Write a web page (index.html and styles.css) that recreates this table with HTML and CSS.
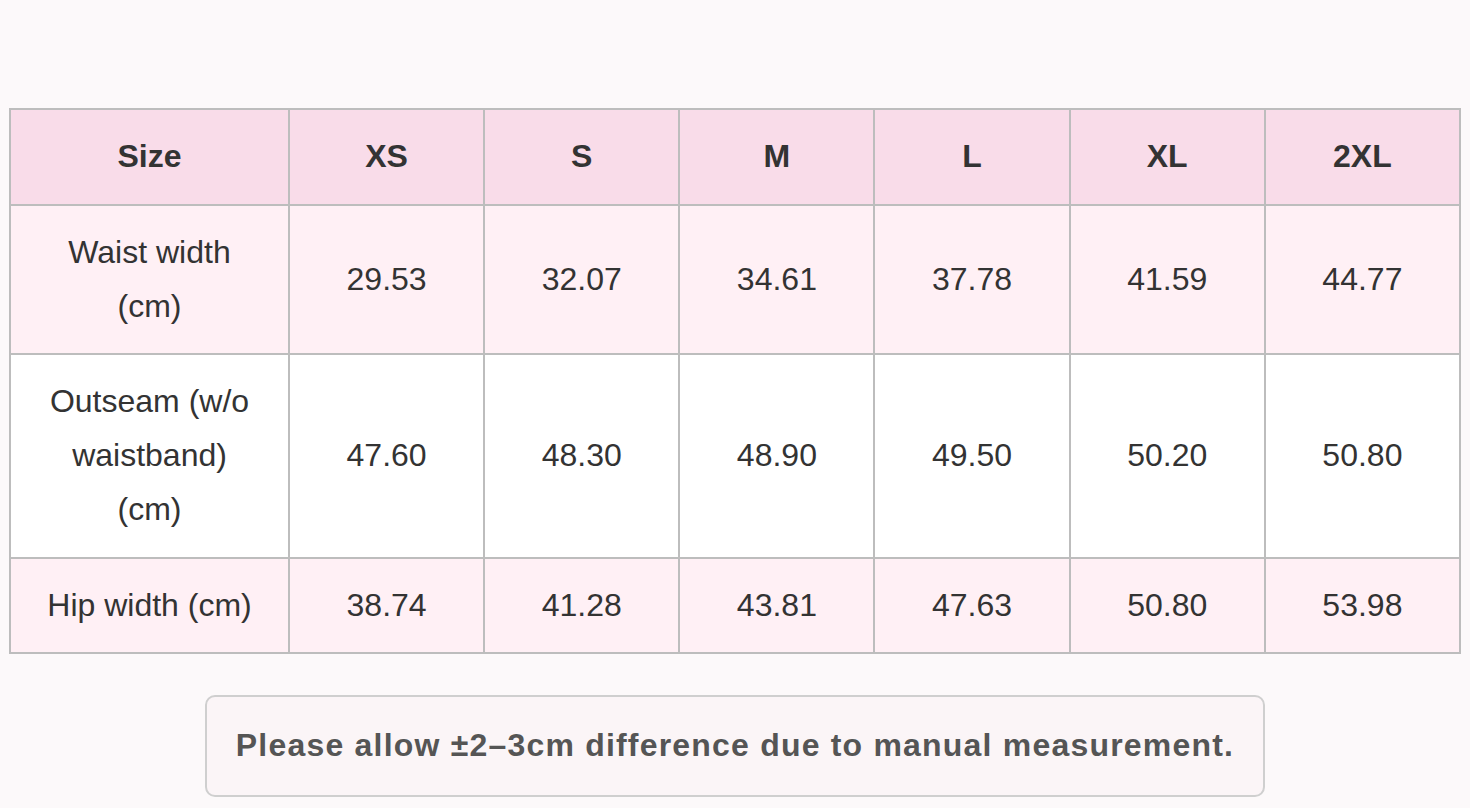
FILE: index.html
```html
<!DOCTYPE html>
<html lang="en">
<head>
    <meta charset="UTF-8">
    <meta name="viewport" content="width=device-width, initial-scale=1.0">
    <title>Size Chart</title>
    <link rel="stylesheet" href="styles.css">
</head>
<body>
    <div class="size-chart">
        <table class="chart">
            <colgroup>
                <col class="label-col">
                <col><col><col><col><col><col>
            </colgroup>
            <thead>
                <tr>
                    <th>Size</th>
                    <th>XS</th>
                    <th>S</th>
                    <th>M</th>
                    <th>L</th>
                    <th>XL</th>
                    <th>2XL</th>
                </tr>
            </thead>
            <tbody>
                <tr>
                    <td>Waist width (cm)</td>
                    <td>29.53</td>
                    <td>32.07</td>
                    <td>34.61</td>
                    <td>37.78</td>
                    <td>41.59</td>
                    <td>44.77</td>
                </tr>
                <tr>
                    <td>Outseam (w/o waistband) (cm)</td>
                    <td>47.60</td>
                    <td>48.30</td>
                    <td>48.90</td>
                    <td>49.50</td>
                    <td>50.20</td>
                    <td>50.80</td>
                </tr>
                <tr>
                    <td>Hip width (cm)</td>
                    <td>38.74</td>
                    <td>41.28</td>
                    <td>43.81</td>
                    <td>47.63</td>
                    <td>50.80</td>
                    <td>53.98</td>
                </tr>
            </tbody>
        </table>

        <div class="note">Please allow ±2–3cm difference due to manual measurement.</div>
    </div>
</body>
</html>
```

FILE: styles.css
```css
body {
    margin: 0;
    background: #fcf9fa;
    font-family: 'Liberation Sans', Arial, sans-serif;
    color: #333;
}
.size-chart {
    padding: 108px 9px 12px;
    display: flex;
    flex-direction: column;
    align-items: center;
}
.chart {
    width: 100%;
    table-layout: fixed;
    border-collapse: collapse;
    font-size: 32px;
    line-height: 1.68;
}
.label-col {
    width: 279px;
}
.chart th, .chart td {
    border: 2px solid #bdbdbd;
    padding: 20px 28px;
    text-align: center;
    vertical-align: middle;
}
.chart th {
    background-color: #f9dce9;
    font-weight: bold;
}
.chart tbody tr:nth-child(odd) td {
    background-color: #fff0f5;
}
.chart tbody tr:nth-child(even) td {
    background-color: #fff;
}
.note {
    margin-top: 41px;
    width: 1060px;
    box-sizing: border-box;
    padding: 22px 20px;
    border: 2px solid #cfcfcf;
    border-radius: 10px;
    background-color: #fbf5f7;
    color: #555;
    font-size: 32px;
    font-weight: bold;
    line-height: 1.68;
    letter-spacing: 1.2px;
    text-align: center;
}
```
